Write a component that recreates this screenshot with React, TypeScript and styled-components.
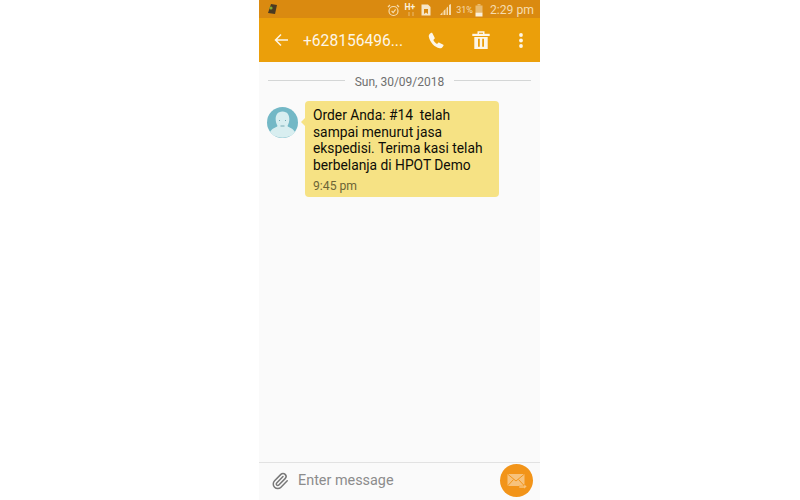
import React from "react";
import styled, { createGlobalStyle } from "styled-components";
import { Paperclip } from "lucide-react";

const Global = createGlobalStyle`
  html, body {
    margin: 0;
    padding: 0;
    background: #ffffff;
  }
`;

const Page = styled.div`
  width: 800px;
  height: 500px;
  display: flex;
  justify-content: center;
  overflow: hidden;
  font-family: Roboto, "Liberation Sans", sans-serif;
`;

const Phone = styled.div`
  width: 281px;
  height: 500px;
  margin-left: -1px;
  display: flex;
  flex-direction: column;
  background: #fafafa;
`;

const StatusBar = styled.div`
  height: 18px;
  flex: none;
  display: flex;
  align-items: center;
  padding: 0 6px 0 7px;
  background: #da8a10;
  color: #f6dcae;
`;

const StatusRight = styled.div`
  margin-left: auto;
  padding-top: 2px;
  display: flex;
  align-items: center;
`;

const Percent = styled.span`
  font-size: 9px;
  margin: 0 2px 0 4px;
`;

const Clock = styled.span`
  font-size: 12.2px;
  margin-left: 7px;
`;

const Toolbar = styled.div`
  height: 44px;
  flex: none;
  display: flex;
  align-items: center;
  background: #eb9f0a;
  color: #fdf6e8;
`;

const BackButton = styled.div`
  width: 44px;
  display: flex;
  justify-content: center;
`;

const Title = styled.div`
  width: 111px;
  padding-top: 2px;
  font-size: 15.6px;
  white-space: nowrap;
`;

const ToolIcon = styled.div<{ $w: number }>`
  width: ${(p) => p.$w}px;
  display: flex;
  justify-content: center;
`;

const Thread = styled.div`
  flex: 1;
  padding: 10px 9px 0 8px;
`;

const DateRow = styled.div`
  display: flex;
  align-items: center;
  gap: 10px;
  padding: 0 0 0 1px;
  height: 19px;
  font-size: 12px;
  color: #6f6f6f;
  white-space: nowrap;
`;

const DateLine = styled.div`
  flex: 1;
  height: 1px;
  margin-bottom: 2px;
  background: #d4d6d6;
`;

const MessageRow = styled.div`
  display: flex;
  align-items: flex-start;
  margin-top: 10px;
`;

const Avatar = styled.div`
  width: 31px;
  height: 31px;
  flex: none;
  margin-top: 6px;
`;

const Bubble = styled.div`
  position: relative;
  width: 194px;
  height: 96px;
  box-sizing: border-box;
  margin-left: 7px;
  padding: 6px 8px;
  border-radius: 4px;
  background: #f6e284;
  color: #0e0d07;
  font-size: 13.8px;
  line-height: 16.7px;
  &::before {
    content: "";
    position: absolute;
    left: -4px;
    top: 17px;
    border-top: 4px solid transparent;
    border-bottom: 4px solid transparent;
    border-right: 4px solid #f6e284;
  }
`;

const BubbleLine = styled.div`
  white-space: pre;
`;

const Time = styled.div`
  margin-top: 5px;
  font-size: 12.2px;
  line-height: 14px;
  color: #6d6536;
`;

const Composer = styled.div`
  height: 35px;
  flex: none;
  display: flex;
  align-items: center;
  margin-bottom: 2px;
  padding: 0 7px 0 12px;
  border-top: 1px solid #e2e2e2;
`;

const Clip = styled(Paperclip)`
  width: 18px;
  height: 18px;
  flex: none;
  color: #787878;
`;

const Placeholder = styled.div`
  margin-left: 9px;
  font-size: 14.4px;
  color: #8c8c8c;
`;

const SendButton = styled.div`
  width: 33px;
  height: 33px;
  flex: none;
  margin-left: auto;
  border-radius: 50%;
  background: #f29419;
  display: flex;
  align-items: center;
  justify-content: center;
`;

export default function App() {
  return (
    <>
      <Global />
      <Page>
        <Phone>
          <StatusBar>
            <svg width="13" height="14" viewBox="0 0 13 14">
              <path d="M5 2 L11 3 L9 12 L2 11 Z" fill="#4a3a22" />
              <circle cx="5" cy="6" r="1.6" fill="#7fa832" />
            </svg>
            <StatusRight>
              <svg width="13" height="13" viewBox="0 0 13 13" fill="none" stroke="#f6dcae" strokeWidth="1.2">
                <circle cx="6.5" cy="7" r="4.5" />
                <path d="M4.6 7 L6.2 8.6 L8.6 5.4" />
                <path d="M1 3 L3 1 M12 3 L10 1" />
              </svg>
              <svg width="14" height="14" viewBox="0 0 14 14" style={{ marginLeft: 4 }}>
                <text x="0.5" y="7" fontSize="8.5" fontWeight="700" fontFamily="Roboto" fill="#fbf1de">H+</text>
                <path d="M5 9 V13 M9 9 V13" stroke="#e8b562" strokeWidth="1.2" />
              </svg>
              <svg width="10" height="12" viewBox="0 0 10 12" style={{ marginLeft: 3 }}>
                <path d="M0.5 0.5 H7 L9.5 3 V11.5 H0.5 Z" fill="#f6e6c8" />
                <path d="M3 10 V5 H7 V10 L5 8.5 Z" fill="#da8a10" />
              </svg>
              <svg width="13" height="12" viewBox="0 0 13 12" style={{ marginLeft: 8 }}>
                <path d="M1 11 L3.5 8 V11 Z M4.5 11 V7 L6.5 5 V11 Z M7.5 11 V4 L9 2.5 V11 Z" fill="#f6dcae" />
                <path d="M10 11 V1 L12 0 V11 Z" fill="#f6dcae" />
              </svg>
              <Percent>31%</Percent>
              <svg width="8" height="13" viewBox="0 0 8 13">
                <rect x="2.5" y="0" width="3" height="1.5" fill="#e9bb70" />
                <rect x="0.5" y="1.5" width="7" height="7" fill="#e9bb70" />
                <rect x="0.5" y="8.5" width="7" height="4" fill="#faf0dc" />
              </svg>
              <Clock>2:29 pm</Clock>
            </StatusRight>
          </StatusBar>

          <Toolbar>
            <BackButton>
              <svg width="14" height="14" viewBox="0 0 14 14" fill="none" stroke="#fdf6e8" strokeWidth="1.5">
                <path d="M14 7 H1.5 M7 1.5 L1.5 7 L7 12.5" />
              </svg>
            </BackButton>
            <Title>+628156496...</Title>
            <ToolIcon $w={44}>
              <svg width="16" height="17" viewBox="0 0 24 24" fill="#fdf6e8" preserveAspectRatio="none">
                <path d="M6.6 1.8 L10 8 C10.3 8.6 10.2 9.2 9.7 9.7 L8 11.4 C9.2 13.8 11.2 15.8 13.6 17 L15.3 15.3 C15.8 14.8 16.4 14.7 17 15 L23 18 C23.4 18.3 23.5 18.9 23.2 19.4 C21.8 22 19.6 23.4 17.6 23 C9.6 21.4 3 14.6 1.2 6.6 C0.8 4.6 2.2 2.6 5 1.2 C5.6 1 6.3 1.2 6.6 1.8 Z" />
              </svg>
            </ToolIcon>
            <ToolIcon $w={46}>
              <svg width="18" height="18" viewBox="0 0 18 18" fill="#fdf6e8">
                <path d="M5.5 3 V0.3 H12.5 V3 H11 V1.7 H7 V3 Z" />
                <rect x="0.3" y="2.8" width="17.4" height="2.2" />
                <path d="M2.3 6 H15.7 V18 H2.3 Z M6 7.8 V15.8 H7.8 V7.8 Z M10.2 7.8 V15.8 H12 V7.8 Z" fillRule="evenodd" />
              </svg>
            </ToolIcon>
            <ToolIcon $w={34}>
              <svg width="4" height="15" viewBox="0 0 4 15" fill="#fdf6e8">
                <circle cx="2" cy="2" r="1.9" />
                <circle cx="2" cy="7.5" r="1.9" />
                <circle cx="2" cy="13" r="1.9" />
              </svg>
            </ToolIcon>
          </Toolbar>

          <Thread>
            <DateRow>
              <DateLine />
              Sun, 30/09/2018
              <DateLine />
            </DateRow>
            <MessageRow>
              <Avatar>
                <svg width="31" height="31" viewBox="0 0 31 31">
                  <circle cx="15.5" cy="15.5" r="15.5" fill="#73b8c6" />
                  <path d="M3 25 C6 20 9 21 10.5 19 C7.5 14 7.5 4.5 15.5 4.5 C23.5 4.5 23.5 14 20.5 19 C22 21 25 20 28 25 C23 32.5 8 32.5 3 25 Z" fill="#d8eef0" />
                  <path d="M12.5 13 V14 M18.5 13 V14 M13.5 19 H17.5" stroke="#5d97a3" strokeWidth="0.8" fill="none" />
                </svg>
              </Avatar>
              <Bubble>
                <BubbleLine>Order Anda: #14  telah</BubbleLine>
                <BubbleLine>sampai menurut jasa</BubbleLine>
                <BubbleLine>ekspedisi. Terima kasi telah</BubbleLine>
                <BubbleLine>berbelanja di HPOT Demo</BubbleLine>
                <Time>9:45 pm</Time>
              </Bubble>
            </MessageRow>
          </Thread>

          <Composer>
            <Clip strokeWidth={2} />
            <Placeholder>Enter message</Placeholder>
            <SendButton>
              <svg width="20" height="16" viewBox="0 0 20 16">
                <rect x="0.5" y="1" width="17" height="12" fill="#f7c27c" />
                <path d="M0.5 1 L9 8 L17.5 1 M0.5 13 L6.5 6.5 M17.5 13 L11.5 6.5" stroke="#f29419" strokeWidth="1" fill="none" />
                <path d="M12 13 H17 V11 L20 13.5 L17 16 V15 H12 Z" fill="#f7c27c" stroke="#f29419" strokeWidth="0.5" />
              </svg>
            </SendButton>
          </Composer>
        </Phone>
      </Page>
    </>
  );
}
